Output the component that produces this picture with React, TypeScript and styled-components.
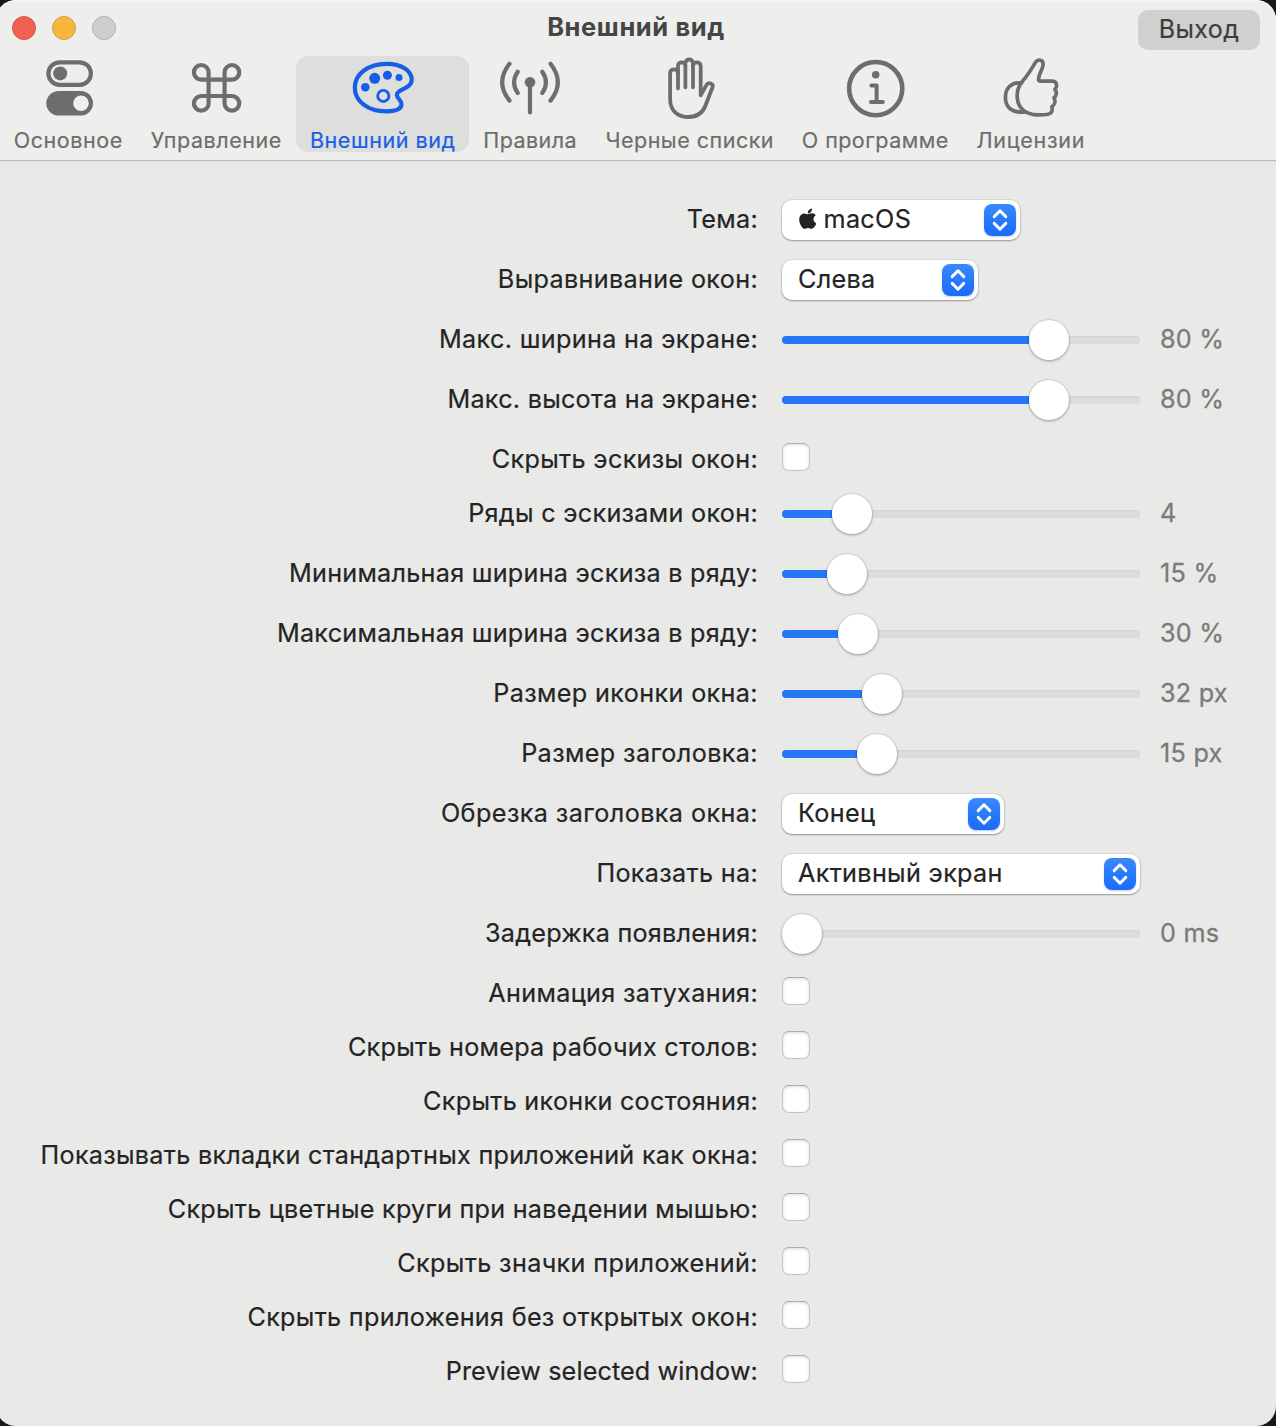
import React from "react";
import styled, { createGlobalStyle } from "styled-components";
import { FaApple } from "react-icons/fa";

const GlobalStyle = createGlobalStyle`
  * { box-sizing: border-box; }
  html, body { margin: 0; background: #15191b; overflow: hidden; }
  body { font-family: Inter, "Noto Sans", sans-serif; }
`;

const Window = styled.main`
  width: 1280px;
  height: 1426px;
  margin-left: -4px;
  padding-left: 4px;
  border-radius: 20px;
  background: #e9e9e8;
  overflow: hidden;
`;

const Header = styled.header`
  height: 161px;
  margin-left: -4px;
  padding-left: 4px;
  background: #eeeeec;
  border-bottom: 1px solid #bdbdbb;
  box-shadow: inset 0 2px 0 #f6f6f5, 0 1px 0 #dededd;
`;

const TitleBar = styled.div`
  display: grid;
  grid-template-columns: 1fr auto 1fr;
  align-items: center;
  height: 56px;
  padding: 0 16px 0 12px;
`;

const Lights = styled.div`
  display: flex;
  gap: 16px;
`;

const Light = styled.span<{ $fill: string; $edge: string }>`
  width: 24px;
  height: 24px;
  border-radius: 50%;
  background: ${(p) => p.$fill};
  border: 1px solid ${(p) => p.$edge};
`;

const Title = styled.h1`
  margin: 0;
  padding-bottom: 2px;
  color: #454545;
  font-size: 25.5px;
  line-height: 32px;
  font-weight: 700;
  letter-spacing: 0.6px;
`;

const QuitButton = styled.button`
  justify-self: end;
  width: 122px;
  height: 40px;
  margin-top: 4px;
  padding: 0 0 2px;
  border: 0;
  border-radius: 10px;
  background: #d0d0cf;
  color: #3c3c3c;
  font: 400 25px/38px Inter, sans-serif;
  letter-spacing: 0.4px;
  -webkit-text-stroke: 0.2px currentColor;
`;

const Tabs = styled.nav`
  display: flex;
`;

const Tab = styled.button<{ $width: number; $active?: boolean }>`
  display: flex;
  flex-direction: column;
  align-items: center;
  width: ${(p) => p.$width}px;
  height: 96px;
  padding: 0;
  border: 0;
  border-radius: 12px;
  background: ${(p) => (p.$active ? "#dededd" : "transparent")};
  color: ${(p) => (p.$active ? "#175ee6" : "#6d6d6c")};
`;

const TabLabel = styled.span<{ $track: number }>`
  margin-top: 6px;
  font: 400 21.5px/28px Inter, sans-serif;
  letter-spacing: ${(p) => p.$track}px;
  margin-right: -${(p) => p.$track}px;
  -webkit-text-stroke: 0.2px currentColor;
  white-space: nowrap;
`;

const Glyph = styled.svg`
  display: block;
  flex: none;
  width: 64px;
  height: 64px;
  fill: none;
  stroke: currentColor;
  stroke-linecap: round;
  stroke-linejoin: round;

  .solid { fill: currentColor; stroke: none; }
`;

const Form = styled.section`
  padding-top: 29px;
`;

const Row = styled.div<{ $compact?: boolean }>`
  display: grid;
  grid-template-columns: 758px 358px 1fr;
  align-items: start;
  height: ${(p) => (p.$compact ? 54 : 60)}px;
  padding-top: 10px;
`;

const Label = styled.label<{ $track: number }>`
  height: 40px;
  color: #242424;
  font-size: 25.2px;
  line-height: 38px;
  letter-spacing: ${(p) => p.$track}px;
  -webkit-text-stroke: 0.2px currentColor;
  text-align: right;
  white-space: nowrap;
`;

const Control = styled.div`
  display: flex;
  width: 358px;
  margin-left: 24px;
`;

const Value = styled.output`
  margin-left: 44px;
  color: #7b7b7a;
  font-size: 25.2px;
  line-height: 38px;
  letter-spacing: 0.25px;
  -webkit-text-stroke: 0.3px currentColor;
`;

const Select = styled.button<{ $width: number }>`
  display: flex;
  align-items: center;
  justify-content: space-between;
  width: ${(p) => p.$width}px;
  height: 40px;
  padding: 0 4px 0 16px;
  border: 0;
  border-radius: 10px;
  background: #fff;
  box-shadow: 0 0 0 1px rgba(0, 0, 0, 0.06), 0 1px 2px rgba(0, 0, 0, 0.32);
  color: #242424;
  font: 400 25.2px/38px Inter, sans-serif;
`;

const SelectText = styled.span`
  display: flex;
  align-items: center;
  gap: 7.5px;
  height: 38px;
  margin-bottom: 2px;
  letter-spacing: 0.32px;
  -webkit-text-stroke: 0.2px currentColor;
  white-space: nowrap;
`;

const AppleMark = styled(FaApple)`
  width: 17.5px;
  height: 23.3px;
  margin: 0 0 1px 0.5px;
`;

const Stepper = styled.span`
  display: grid;
  place-items: center;
  width: 32px;
  height: 32px;
  border-radius: 8px;
  background: linear-gradient(#3a89fc, #1a6af8);
  box-shadow: 0 1px 2px rgba(26, 106, 248, 0.3);
`;

const Checkbox = styled.span`
  width: 28px;
  height: 28px;
  margin-top: 3px;
  border: 1px solid #c3c3c2;
  border-top-color: #adadac;
  border-radius: 7px;
  background: #fff;
  box-shadow: inset 0 1px 3px rgba(0, 0, 0, 0.14);
`;

const Track = styled.div`
  display: flex;
  align-items: center;
  width: 358px;
  height: 8px;
  margin-top: 16px;
  border-radius: 4px;
  background: #dcdcdb;
  box-shadow: inset 0 1px 1px rgba(0, 0, 0, 0.05);
`;

const Fill = styled.span`
  flex: none;
  height: 8px;
  border-radius: 4px 0 0 4px;
  background: #2477f6;
`;

const Knob = styled.span`
  flex: none;
  width: 40px;
  height: 40px;
  border-radius: 50%;
  background: #fff;
  box-shadow: 0 0 0 1px rgba(0, 0, 0, 0.06), 0 1px 3px rgba(0, 0, 0, 0.32);
`;

const TogglesIcon = () => (
  <Glyph viewBox="0 0 64 64" strokeWidth="4.2">
    <rect x="12.4" y="6.3" width="42.5" height="22.6" rx="11.3" />
    <circle className="solid" cx="24.2" cy="17.4" r="7" />
    <path
      className="solid"
      fillRule="evenodd"
      d="M22.6 35H44.7a12.3 12.3 0 0 1 0 24.6H22.6a12.3 12.3 0 0 1 0-24.6ZM45 39.5a7.8 7.8 0 1 0 0 15.6a7.8 7.8 0 0 0 0-15.6Z"
    />
  </Glyph>
);

const CommandIcon = () => (
  <Glyph viewBox="0 0 64 64" strokeWidth="4.2">
    <path d="M24.6 16.3a7.35 7.35 0 1 0-7.35 7.4H48a7.35 7.35 0 1 0-7.4-7.4V47.4a7.35 7.35 0 1 0 7.4-7.4H17.25a7.35 7.35 0 1 0 7.35 7.4Z" />
  </Glyph>
);

const PaletteIcon = () => (
  <Glyph viewBox="0.5 -0.3 64 64" strokeWidth="4.2">
    <path d="M36.2 7.6C51.5 7.6 61.2 14.6 61.2 23.2C61.2 33 46.4 32.4 46.4 38.6C46.4 42.4 51 43.4 51 48C51 52.6 45.4 55 36 55C16.4 55 4.3 44.5 4.3 31.2C4.3 17.5 18 7.6 36.2 7.6Z" />
    <circle className="solid" cx="14.8" cy="31" r="4.3" />
    <circle className="solid" cx="24.2" cy="22" r="5.5" />
    <circle className="solid" cx="36.9" cy="18.9" r="4.5" />
    <circle className="solid" cx="48.5" cy="21.3" r="3.5" />
    <circle cx="32.8" cy="39.6" r="5.6" strokeWidth="2.8" />
  </Glyph>
);

const AntennaIcon = () => (
  <Glyph viewBox="0 0 64 64" strokeWidth="4.2">
    <circle className="solid" cx="32" cy="26.3" r="5.3" />
    <path d="M32 28V56.5" />
    <path d="M19.7 15.8Q12.4 26.4 19.7 37M44.3 15.8Q51.6 26.4 44.3 37" />
    <path d="M11.5 7.8Q-3.2 26.4 11.5 44.6M52.5 7.8Q67.2 26.4 52.5 44.6" />
  </Glyph>
);

const HandIcon = () => (
  <Glyph viewBox="0.5 0 64 64" strokeWidth="3.8">
    <path d="M20.5 32.3V17C20.5 12.2 12.6 12.2 12.6 17V43C12.6 54.5 20 61 31 61C40.5 61 45.3 56.7 48 49.5L54.9 31.5C56.3 27.5 51 25.3 48.8 29.4L43.2 39.2V10C43.2 5.2 35.5 5.2 35.5 10" />
    <path d="M20.5 18V10C20.5 5.2 27.9 5.2 27.9 10M27.9 31.3V7C27.9 2.3 35.5 2.3 35.5 7V31.3" />
  </Glyph>
);

const InfoIcon = () => (
  <Glyph viewBox="0 0 64 64" strokeWidth="4">
    <circle cx="32.7" cy="32.6" r="26.6" strokeWidth="4.6" />
    <circle className="solid" cx="32.7" cy="18.7" r="3.8" />
    <path d="M28.4 29.6H33.6V46M28 46.1H39.8" />
  </Glyph>
);

const ThumbIcon = () => (
  <Glyph viewBox="0.5 0 64 64" strokeWidth="3.7">
    <path d="M24.5 24.6C30 18.5 34 11 37.2 6C39.5 2.5 45 4.2 44.6 8.6C44.2 14 39.9 18 40 23.4Q40.2 25.2 42 25.2H53.5C58.4 25.2 59.2 30 56.4 33.4C58.6 36 58.2 39.8 55.5 41.8C57.3 45.2 56.2 49 53.3 50.8C54.5 54.8 53 58 48.5 58.5C42 59.3 34 59.1 28.6 56.6C16 50.8 16.3 33.2 24.5 24.6Z" />
    <path d="M23 27C13.5 26 6.9 31.5 6.9 41.2C6.9 51.5 13.5 57.2 27 56" />
  </Glyph>
);

const tabs = [
  { text: "Основное", width: 136, track: 0.55, Icon: TogglesIcon },
  { text: "Управление", width: 160, track: 0.55, Icon: CommandIcon },
  { text: "Внешний вид", width: 173, track: 0.57, Icon: PaletteIcon, active: true },
  { text: "Правила", width: 122, track: 0.42, Icon: AntennaIcon },
  { text: "Черные списки", width: 197, track: 0.5, Icon: HandIcon },
  { text: "О программе", width: 174, track: 0.45, Icon: InfoIcon },
  { text: "Лицензии", width: 137, track: 0.7, Icon: ThumbIcon },
];

type Setting = {
  label: string;
  track: number;
  select?: { text: string; width: number; apple?: boolean };
  slider?: { fill: number; value: string };
};

const settings: Setting[] = [
  { label: "Тема:", track: 0.3, select: { text: "macOS", width: 238, apple: true } },
  { label: "Выравнивание окон:", track: 0.33, select: { text: "Слева", width: 196 } },
  { label: "Макс. ширина на экране:", track: 0.33, slider: { fill: 247, value: "80 %" } },
  { label: "Макс. высота на экране:", track: 0.26, slider: { fill: 247, value: "80 %" } },
  { label: "Скрыть эскизы окон:", track: 0.33 },
  { label: "Ряды с эскизами окон:", track: 0.3, slider: { fill: 50, value: "4" } },
  { label: "Минимальная ширина эскиза в ряду:", track: 0.26, slider: { fill: 45, value: "15 %" } },
  { label: "Максимальная ширина эскиза в ряду:", track: 0.26, slider: { fill: 56, value: "30 %" } },
  { label: "Размер иконки окна:", track: 0.36, slider: { fill: 80, value: "32 px" } },
  { label: "Размер заголовка:", track: 0.38, slider: { fill: 75, value: "15 px" } },
  { label: "Обрезка заголовка окна:", track: 0.41, select: { text: "Конец", width: 222 } },
  { label: "Показать на:", track: 0.32, select: { text: "Активный экран", width: 358 } },
  { label: "Задержка появления:", track: 0.23, slider: { fill: 0, value: "0 ms" } },
  { label: "Анимация затухания:", track: 0.33 },
  { label: "Скрыть номера рабочих столов:", track: 0.26 },
  { label: "Скрыть иконки состояния:", track: 0.28 },
  { label: "Показывать вкладки стандартных приложений как окна:", track: 0.28 },
  { label: "Скрыть цветные круги при наведении мышью:", track: 0.24 },
  { label: "Скрыть значки приложений:", track: 0.37 },
  { label: "Скрыть приложения без открытых окон:", track: 0.3 },
  { label: "Preview selected window:", track: 0.12 },
];

const Chevrons = () => (
  <svg width="18" height="24" viewBox="0 0 18 24" fill="none" stroke="#fff" strokeWidth="2.9" strokeLinecap="round" strokeLinejoin="round">
    <path d="M3.2 8.6L9 2.8L14.8 8.6M3.2 15.4L9 21.2L14.8 15.4" />
  </svg>
);

function SettingRow({ label, track, select, slider }: Setting) {
  return (
    <Row $compact={!select && !slider}>
      <Label $track={track}>{label}</Label>
      <Control>
        {select && (
          <Select $width={select.width}>
            <SelectText>
              {select.apple && <AppleMark />}
              {select.text}
            </SelectText>
            <Stepper>
              <Chevrons />
            </Stepper>
          </Select>
        )}
        {slider && (
          <Track>
            <Fill style={{ width: slider.fill }} />
            <Knob />
          </Track>
        )}
        {!select && !slider && <Checkbox role="checkbox" aria-checked={false} />}
      </Control>
      {slider && <Value>{slider.value}</Value>}
    </Row>
  );
}

export default function App() {
  return (
    <>
      <GlobalStyle />
      <Window>
        <Header>
          <TitleBar>
            <Lights>
              <Light $fill="#ef6053" $edge="#d9503f" />
              <Light $fill="#f6b73f" $edge="#d99e37" />
              <Light $fill="#cfcfce" $edge="#b0b0af" />
            </Lights>
            <Title>Внешний вид</Title>
            <QuitButton>Выход</QuitButton>
          </TitleBar>
          <Tabs>
            {tabs.map(({ text, width, track, Icon, active }) => (
              <Tab key={text} $width={width} $active={active}>
                <Icon />
                <TabLabel $track={track}>{text}</TabLabel>
              </Tab>
            ))}
          </Tabs>
        </Header>
        <Form>
          {settings.map((s) => (
            <SettingRow key={s.label} {...s} />
          ))}
        </Form>
      </Window>
    </>
  );
}
